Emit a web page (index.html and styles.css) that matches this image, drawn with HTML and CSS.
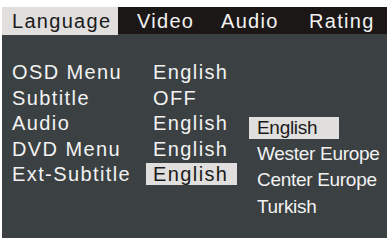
FILE: index.html
```html
<!DOCTYPE html>
<html>
<head>
<meta charset="utf-8">
<link rel="stylesheet" href="styles.css">
</head>
<body>
<div class="osd">
  <div class="tabs">
    <div class="tab active">Language</div>
    <div class="tab">Video</div>
    <div class="tab">Audio</div>
    <div class="tab">Rating</div>
  </div>
  <div class="panel">
    <div class="settings">
      <div class="label">OSD Menu</div><div class="value">English</div>
      <div class="label">Subtitle</div><div class="value">OFF</div>
      <div class="label">Audio</div><div class="value">English</div>
      <div class="label">DVD Menu</div><div class="value">English</div>
      <div class="label">Ext-Subtitle</div><div class="value selected">English</div>
    </div>
    <div class="submenu">
      <div class="option selected">English</div>
      <div class="option">Wester Europe</div>
      <div class="option">Center Europe</div>
      <div class="option">Turkish</div>
    </div>
  </div>
</div>
</body>
</html>
```

FILE: styles.css
```css
html, body {
  margin: 0;
  padding: 0;
  background: #ffffff;
}

body {
  font-family: "Liberation Sans", Arial, sans-serif;
  width: 387px;
  height: 240px;
  overflow: hidden;
}

.osd {
  margin: 7px 0 0 2px;
  width: 385px;
}

.tabs {
  display: grid;
  grid-template-columns: 116px 84px 88px 1fr;
  height: 27px;
  background: #1b1716;
}

.tab {
  color: #f2f2f2;
  font-size: 20px;
  letter-spacing: 1.3px;
  line-height: 28px;
  padding-left: 19px;
  white-space: nowrap;
}

.tab.active {
  background: #e0dfdd;
  color: #1a1a1a;
  padding-left: 10px;
}

.panel {
  background: #3b4042;
  height: 204px;
  box-sizing: border-box;
  padding: 27px 0 0 10px;
  display: flex;
  align-items: flex-start;
}

.settings {
  display: grid;
  grid-template-columns: 134px 91px;
  grid-auto-rows: 22px;
  row-gap: 3.6px;
}

.label, .value {
  color: #f2f2f2;
  font-size: 20px;
  letter-spacing: 1.4px;
  line-height: 22px;
  white-space: nowrap;
}

.value {
  padding-left: 7px;
}

.value.selected {
  background: #e0dfdd;
  color: #1a1a1a;
}

.submenu {
  margin: 56px 0 0 12px;
  display: flex;
  flex-direction: column;
  gap: 4.2px;
}

.option {
  color: #f2f2f2;
  font-size: 19px;
  letter-spacing: -0.3px;
  line-height: 22px;
  height: 22px;
  padding-left: 8px;
  white-space: nowrap;
}

.option.selected {
  width: 82px;
  background: #e0dfdd;
  color: #1a1a1a;
}
```
